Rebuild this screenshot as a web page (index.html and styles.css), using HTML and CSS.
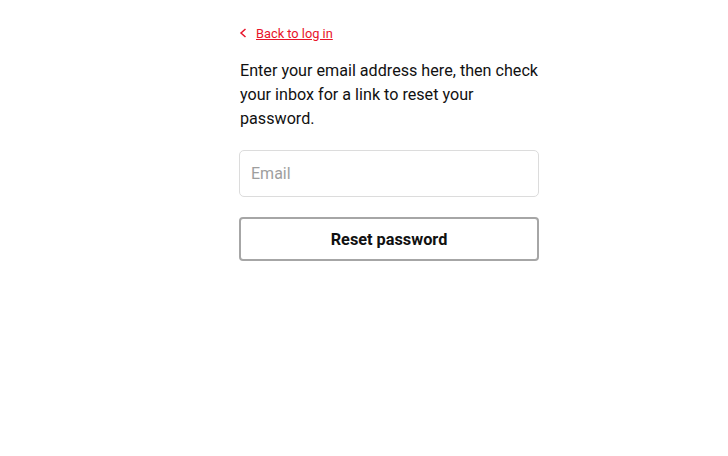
FILE: index.html
```html
<!DOCTYPE html>
<html>
<head>
<meta charset="utf-8">
<link rel="stylesheet" href="styles.css">
</head>
<body>
<main class="wrap">
  <a class="back" href="#">
    <svg class="chev" width="8" height="10" viewBox="0 0 8 10"><path d="M6.5 1 L2 5 L6.5 9" fill="none" stroke="#e8142a" stroke-width="1.5"/></svg>
    <span class="back-text">Back to log in</span>
  </a>
  <p class="intro">Enter your email address here, then check your inbox for a link to reset your password.</p>
  <input class="email" type="email" placeholder="Email">
  <button class="reset">Reset password</button>
</main>
</body>
</html>
```
FILE: styles.css
```css
html, body { margin: 0; padding: 0; background: #fff; }
body { font-family: Roboto, "Liberation Sans", sans-serif; color: #111; }
.wrap {
  width: 300px;
  margin-left: 239px;
  padding-top: 24px;
  display: flex;
  flex-direction: column;
}
.back {
  display: flex;
  align-items: center;
  gap: 9px;
  font-size: 12.8px;
  color: #e8142a;
  text-decoration: none;
  height: 18px;
  padding-left: 0;
}
.back-text { text-decoration: underline; }
.intro {
  margin: 17px 0 0 1px;
  font-size: 16.15px;
  line-height: 24px;
  color: #111;
}
.email {
  margin-top: 19px;
  height: 47px;
  box-sizing: border-box;
  border: 1px solid #dcdcdc;
  border-radius: 5px;
  padding: 0 11px;
  font-family: inherit;
  font-size: 16px;
  outline: none;
}
.email::placeholder { color: #9e9e9e; }
.reset {
  margin-top: 20px;
  height: 44px;
  box-sizing: border-box;
  border: 2px solid #a6a6a6;
  border-radius: 4px;
  background: #fff;
  font-family: inherit;
  font-weight: 700;
  font-size: 16.3px;
  color: #111;
}
```
